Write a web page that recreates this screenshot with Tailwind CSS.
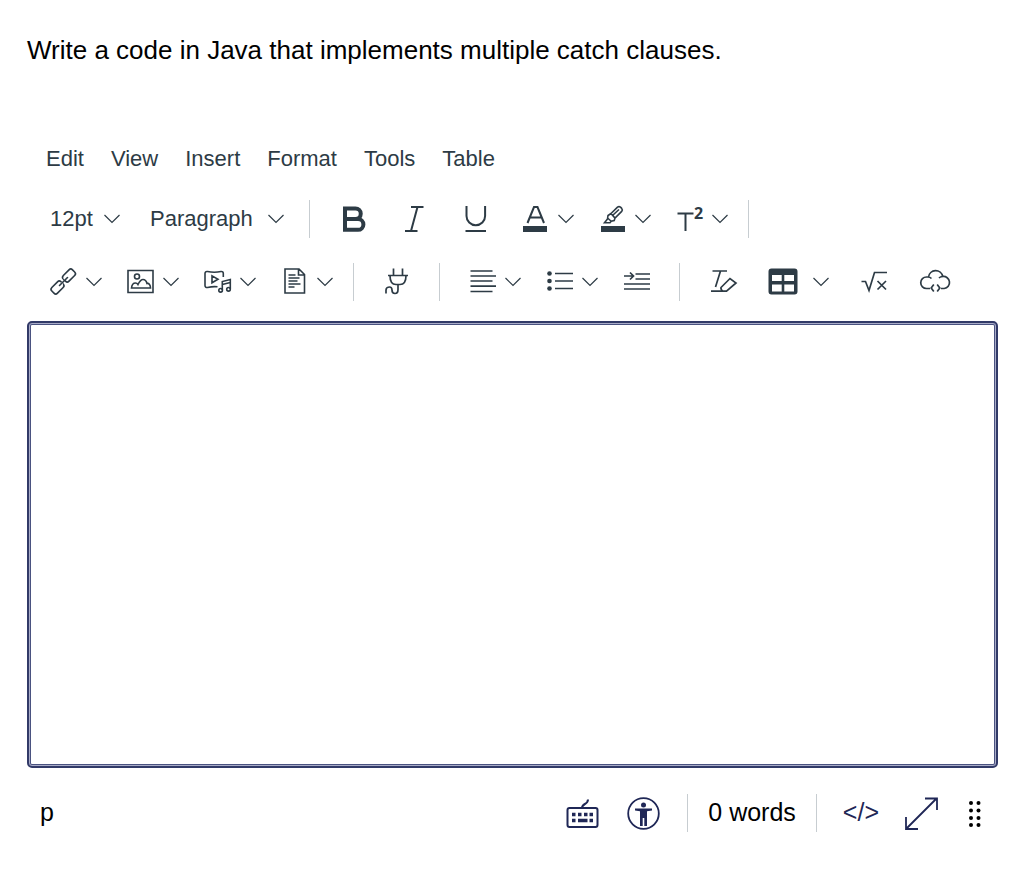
<!DOCTYPE html>
<html lang="en">
<head>
  <meta charset="UTF-8" />
  <meta name="viewport" content="width=device-width, initial-scale=1.0"/>
  <title>Question Editor</title>
  <script src="https://cdn.jsdelivr.net/npm/@tailwindcss/browser@4"></script>
</head>
<body class="bg-white text-black font-['Liberation_Sans',Arial,sans-serif]">
  <!-- shared chevron -->
  <svg class="hidden">
    <symbol id="chev" viewBox="0 0 16 16"><path d="M0.5 4 8 11.5 15.5 4" fill="none" stroke="currentColor" stroke-width="1.2"/></symbol>
  </svg>

  <main class="pl-[27px] pr-[26px] py-8">
    <p class="text-[26px] leading-9">Write a code in Java that implements multiple catch clauses.</p>

    <div class="mt-[72px] text-[#2d3b45]">
      <nav class="flex items-center gap-[27px] pl-[19px] h-9 text-[22px]" aria-label="Editor menu">
        <button type="button">Edit</button>
        <button type="button">View</button>
        <button type="button">Insert</button>
        <button type="button">Format</button>
        <button type="button">Tools</button>
        <button type="button">Table</button>
      </nav>

      <div class="flex items-center pl-[13px] mt-[18px] h-[50px]" role="toolbar" aria-label="Styles">
        <div class="relative w-[100px]">
          <select class="appearance-none w-full pl-[10px] pb-[2px] text-[22px] bg-transparent outline-none" aria-label="Font size">
            <option>12pt</option>
          </select>
          <svg class="absolute right-5 top-[9px] size-4 pointer-events-none"><use href="#chev"/></svg>
        </div>
        <div class="relative w-[164px]">
          <select class="appearance-none w-full pl-[10px] pb-[2px] text-[22px] bg-transparent outline-none" aria-label="Block format">
            <option>Paragraph</option>
          </select>
          <svg class="absolute right-5 top-[9px] size-4 pointer-events-none"><use href="#chev"/></svg>
        </div>
        <div class="w-px h-[38px] ml-[5px] mr-[19px] bg-[#c7cdd1]"></div>
        <button type="button" class="flex w-[61px] pl-2" aria-label="Bold">
          <svg class="size-8" viewBox="0 0 32 32" fill="none" stroke="currentColor" stroke-width="4"><path d="M8 5v22M6 5.500h12.500a5 5 0 0 1 0 10.500H8M18 16h3a5.300 5.300 0 0 1 0 10.800H6"/></svg>
        </button>
        <button type="button" class="flex w-[61px] pl-2" aria-label="Italic">
          <svg class="size-8" viewBox="0 0 32 32" fill="none" stroke="currentColor" stroke-width="2"><path d="M13 4h12.500M7 28h12.500M19.500 4 13 28"/></svg>
        </button>
        <button type="button" class="flex w-[61px] pl-2" aria-label="Underline">
          <svg class="size-8" viewBox="0 0 32 32" fill="none" stroke="currentColor" stroke-width="2"><path d="M7.500 3v10a9.300 9.300 0 0 0 18.600 0V3M6.500 28h20.500"/></svg>
        </button>
        <button type="button" class="flex items-center gap-[6px] w-[77px] pl-2" aria-label="Text color">
          <svg class="size-8" viewBox="0 0 32 32" fill="none" stroke="currentColor" stroke-width="2"><path d="M7.500 20 14 4h3.500L24 20M10 14.500h12"/><path fill="currentColor" stroke="none" d="M3 23h24v6H3z"/></svg>
          <svg class="size-4"><use href="#chev"/></svg>
        </button>
        <button type="button" class="flex items-center gap-[6px] w-[77px] pl-2" aria-label="Highlight color">
          <svg class="size-8" viewBox="0 0 32 32" fill="none" stroke="currentColor" stroke-width="1.600"><path d="M14 10.500 20.500 4.200q1.500-1.200 3 0l1.200 1.200q1.300 1.500 0 3L18 15zM14 10.500l-3 2-.5 3.500-3 3.700h5.500l1.200-1.500 3-.7.8-2.500M10.500 15l4 3.500M15.500 12.500 22 6.500"/><path fill="currentColor" stroke="none" d="M4 23h24v6H4z"/></svg>
          <svg class="size-4"><use href="#chev"/></svg>
        </button>
        <button type="button" class="flex items-center gap-[6px] w-[77px] pl-2" aria-label="Superscript">
          <svg class="size-8" viewBox="0 0 32 32" fill="none" stroke="currentColor" stroke-width="2"><path d="M3.500 10.500h16M11.500 10.500V28"/><text x="20" y="15.500" font-family="Open Sans" font-weight="700" font-size="16" fill="currentColor" stroke="none">2</text></svg>
          <svg class="size-4"><use href="#chev"/></svg>
        </button>
        <div class="w-px h-[38px] ml-[5px] bg-[#c7cdd1]"></div>
      </div>

      <div class="flex items-center pl-[13px] mt-[13px] h-[50px]" role="toolbar" aria-label="Content">
        <button type="button" class="flex items-center gap-[6px] w-[77px] pl-2" aria-label="Link">
          <svg class="size-8" viewBox="0 0 32 32" fill="none" stroke="currentColor" stroke-width="1.600" stroke-linecap="round"><rect x="14.500" y="5.500" width="13" height="8" rx="2.500" transform="rotate(-45 21 9.500)"/><rect x="3" y="17.500" width="13" height="8" rx="2.500" transform="rotate(-45 9.500 21.500)"/><path stroke="#fff" stroke-width="2" d="M16.500 12.300l.8.800M13.200 17.200l.8.800"/><path d="M11.500 19.500 19.500 11.500"/></svg>
          <svg class="size-4"><use href="#chev"/></svg>
        </button>
        <button type="button" class="flex items-center gap-[6px] w-[77px] pl-2" aria-label="Image">
          <svg class="size-8" viewBox="0 0 32 32" fill="none" stroke="currentColor" stroke-width="1.600"><path d="M3 4.500h25v22H3zM6.500 22c.3-3 1.500-5 4-5 1.500 0 2 .7 2.500 1.500 1.500-3 3-5 5-5 2.500 0 3.500 2 4 4 2-.5 3.500 1.500 3.500 4.500z"/><circle cx="12" cy="10.500" r="2.500"/></svg>
          <svg class="size-4"><use href="#chev"/></svg>
        </button>
        <button type="button" class="flex items-center gap-[6px] w-[77px] pl-2" aria-label="Media">
          <svg class="size-8" viewBox="0 0 32 32" fill="none" stroke="currentColor" stroke-width="1.600"><path d="M15.500 20.800c-3.500-.5-7 0-10 .7-1.500.2-2.500-.5-2.500-2V7.500C3 6 4 5.200 5.500 5.500c4.500 1 9 1 13.500 0 1.500-.2 2.300.5 2.300 2V11M10 9.800v7l6-3.500z"/><path d="M20.300 24V15.500l8-2v9.500M20.300 18.500l8-2"/><circle cx="18.600" cy="24.300" r="1.800"/><circle cx="26.500" cy="23.300" r="1.800"/></svg>
          <svg class="size-4"><use href="#chev"/></svg>
        </button>
        <button type="button" class="flex items-center gap-[6px] w-[77px] pl-2" aria-label="Document">
          <svg class="size-8" viewBox="0 0 32 32" fill="none" stroke="currentColor" stroke-width="1.600"><path d="M6 3h14l5.500 5.500V27H6zM19.500 3v6h6M9.500 9h7M9.500 12h11M9.500 15h9M9.500 18h12M9.500 21h6"/></svg>
          <svg class="size-4"><use href="#chev"/></svg>
        </button>
        <div class="w-px h-[38px] ml-[5px] mr-[19px] bg-[#c7cdd1]"></div>
        <button type="button" class="flex w-[61px] pl-2" aria-label="Apps">
          <svg class="size-8" viewBox="0 0 32 32" fill="none" stroke="currentColor" stroke-width="1.700"><path d="M12.500 2.500v7M21.500 2.500v7M7 9.500h20M9 9.500c0 5.500 2 9 6 9h4c4 0 6-3.500 6-9M17 18.500v5c0 2.500-1 4-3 4s-3-1.500-3-3.500-1-3-2.500-3-3.500 1-3.500 3V27.500"/></svg>
        </button>
        <div class="w-px h-[38px] ml-[5px] mr-[19px] bg-[#c7cdd1]"></div>
        <button type="button" class="flex items-center gap-[6px] w-[77px] pl-2" aria-label="Align">
          <svg class="size-8" viewBox="0 0 32 32" fill="none" stroke="currentColor" stroke-width="1.700"><path d="M3.500 5h22M3.500 10h25.500M3.500 15h22M3.500 20.200h25.500M3.500 25.500h22"/></svg>
          <svg class="size-4"><use href="#chev"/></svg>
        </button>
        <button type="button" class="flex items-center gap-[6px] w-[77px] pl-2" aria-label="Bullet list">
          <svg class="size-8" viewBox="0 0 32 32" fill="none" stroke="currentColor" stroke-width="1.700"><path d="M11 7.500h18M11 15h18M11 22.500h18"/><g fill="currentColor" stroke="none"><circle cx="5.500" cy="7.500" r="2.300"/><circle cx="5.500" cy="15" r="2.300"/><circle cx="5.500" cy="22.500" r="2.300"/></g></svg>
          <svg class="size-4"><use href="#chev"/></svg>
        </button>
        <button type="button" class="flex w-[61px] pl-2" aria-label="Increase indent">
          <svg class="size-8" viewBox="0 0 32 32" fill="none" stroke="currentColor" stroke-width="1.700"><path d="M14.500 8H29M14.500 13H29M3 18h26M3 23h26M3 10h9.500M9 6.500l3.500 3.500L9 13.500"/></svg>
        </button>
        <div class="w-px h-[38px] ml-[5px] mr-[19px] bg-[#c7cdd1]"></div>
        <button type="button" class="flex w-[61px] pl-2" aria-label="Clear formatting">
          <svg class="size-8" viewBox="0 0 32 32" fill="none" stroke="currentColor" stroke-width="1.700"><path d="M5.500 5h14.500M13.500 5 8.500 21M4 25.200H18M14 21.500l9-9 6 4.500-9.500 8.200h-3.500q-2.500-1.500-2-3.700z"/></svg>
        </button>
        <button type="button" class="flex items-center gap-[13px] w-[90px] pl-2" aria-label="Table">
          <svg class="size-8" viewBox="0 0 32 32"><path fill="currentColor" fill-rule="evenodd" d="M3.500 2.500h23q3 0 3 3v20q0 3-3 3h-23q-3 0-3-3v-20q0-3 3-3zM4 9v6h9.700V9zM16.300 9v6H26V9zM4 18.500v7h9.700v-7zM16.300 18.500v7H26v-7z"/></svg>
          <svg class="size-4"><use href="#chev"/></svg>
        </button>
        <button type="button" class="flex w-[61px] pl-2" aria-label="Equation">
          <svg class="size-8" viewBox="0 0 32 32" fill="none" stroke="currentColor" stroke-width="1.700"><path d="M3.500 15.500h4l3.500 9L16.500 6.500h12.500M19.500 15l8.500 8.500M28 15l-8.500 8.500"/></svg>
        </button>
        <button type="button" class="flex pl-2" aria-label="Embed">
          <svg class="size-8" viewBox="0 0 32 32" fill="none" stroke="currentColor" stroke-width="1.700"><path d="M11 22.500H7.500a5.700 5.700 0 0 1 0-11.500h2a7.200 7.200 0 0 1 14.200-.5 6 6 0 0 1 1.500 12H22M9 11c1.500 0 2.500.5 3.500 1.500M23.500 10.500c-1.500 0-2.500.5-3.500 1.500"/><path d="M14.800 18.500 12.200 22l2.600 3.500M18.200 18.500l2.600 3.500-2.600 3.500"/></svg>
        </button>
      </div>
    </div>

    <textarea class="block w-full h-[447px] mt-[14px] p-4 resize-none outline-none border-2 border-[#323a68] rounded-[5px] shadow-[inset_0_0_0_1px_#a9acc8,inset_0_0_0_2px_#4a5280] text-[22px]" aria-label="Answer"></textarea>

    <footer class="flex items-center h-[90px] pl-[13px] pr-3 text-[25px] text-[#1f2756]">
      <span class="flex-1 text-black">p</span>
      <button type="button" class="mr-7" aria-label="Keyboard shortcuts">
        <svg class="size-[33px]" viewBox="0 0 33 33" fill="none" stroke="currentColor" stroke-width="2"><rect x="1.500" y="11" width="30" height="19" rx="2"/><path d="M16 11c0-5 6-3 6-8.500"/><path stroke-width="3.500" d="M6 17.500h3.500M12 17.500h3.500M18 17.500h3.500M23.500 17.500H27M6 23.500h3.500M12 23.500h9.500M23.500 23.500H27"/></svg>
      </button>
      <button type="button" class="mr-[27px]" aria-label="Accessibility checker">
        <svg class="size-[33px]" viewBox="0 0 33 33"><circle cx="16.500" cy="16.500" r="15.300" fill="none" stroke="currentColor" stroke-width="1.800"/><circle cx="16.500" cy="8" r="2.500" fill="currentColor"/><path fill="currentColor" d="M8 11.500h17v2l-5 .8V29h-2.700v-8h-1.600v8h-2.700V14.300L8 13.500z"/></svg>
      </button>
      <div class="w-px h-[38px] bg-[#c7cdd1]"></div>
      <button type="button" class="px-5 text-black">0 words</button>
      <div class="w-px h-[38px] bg-[#c7cdd1]"></div>
      <button type="button" class="px-[26px]" aria-label="HTML source">&lt;/&gt;</button>
      <button type="button" class="mr-6" aria-label="Fullscreen">
        <svg class="size-[33px]" viewBox="0 0 33 33" fill="none" stroke="currentColor" stroke-width="1.800"><path d="M2 31 31 2M20 1.500h12V13M1 20v12h12"/></svg>
      </button>
      <button type="button" class="text-black" aria-label="Resize editor">
        <svg class="w-6 h-8" viewBox="0 0 24 32" fill="currentColor"><circle cx="9" cy="6" r="2"/><circle cx="16.500" cy="6" r="2"/><circle cx="9" cy="13.500" r="2"/><circle cx="16.500" cy="13.500" r="2"/><circle cx="9" cy="21" r="2"/><circle cx="16.500" cy="21" r="2"/><circle cx="9" cy="28" r="2"/><circle cx="16.500" cy="28" r="2"/></svg>
      </button>
    </footer>
  </main>
</body>
</html>
